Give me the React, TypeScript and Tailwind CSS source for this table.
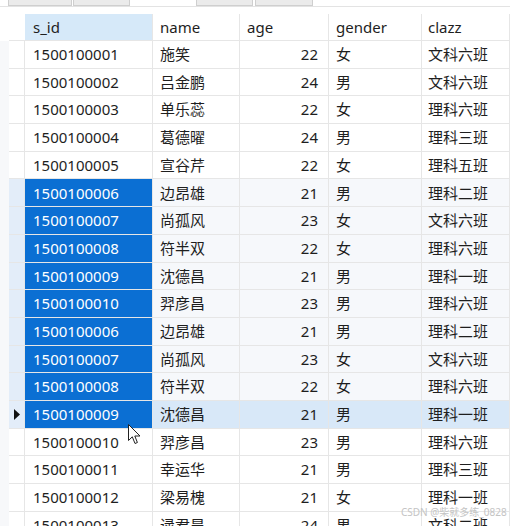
import React from "react";

type Row = [string, string, number, string, string];

const rows: Row[] = [
  ["1500100001", "施笑", 22, "女", "文科六班"],
  ["1500100002", "吕金鹏", 24, "男", "文科六班"],
  ["1500100003", "单乐蕊", 22, "女", "理科六班"],
  ["1500100004", "葛德曜", 24, "男", "理科三班"],
  ["1500100005", "宣谷芹", 22, "女", "理科五班"],
  ["1500100006", "边昂雄", 21, "男", "理科二班"],
  ["1500100007", "尚孤风", 23, "女", "文科六班"],
  ["1500100008", "符半双", 22, "女", "理科六班"],
  ["1500100009", "沈德昌", 21, "男", "理科一班"],
  ["1500100010", "羿彦昌", 23, "男", "理科六班"],
  ["1500100006", "边昂雄", 21, "男", "理科二班"],
  ["1500100007", "尚孤风", 23, "女", "文科六班"],
  ["1500100008", "符半双", 22, "女", "理科六班"],
  ["1500100009", "沈德昌", 21, "男", "理科一班"],
  ["1500100010", "羿彦昌", 23, "男", "理科六班"],
  ["1500100011", "幸运华", 21, "男", "理科三班"],
  ["1500100012", "梁易槐", 21, "女", "理科一班"],
  ["1500100013", "逯君昊", 24, "男", "文科二班"],
];

const cols = "grid grid-cols-[9px_16px_128px_87px_89px_93px_88px]";
const cell = "border-b border-r border-[#e6e6e6] flex items-center";

export default function App() {
  return (
    <div
      className="relative w-[510px] h-[526px] overflow-hidden bg-white text-[15px] text-[#1e1e1e]"
      style={{ fontFamily: '"Noto Sans", "Noto Sans CJK SC", sans-serif' }}
    >
      {/* tab strip */}
      <div className="relative h-[7px] border-b border-[#e3e3e3]">
        <div className="absolute left-[8px] top-0 w-[64px] h-[6px] bg-[#ebebeb] border border-t-0 border-[#cfcfcf]" />
        <div className="absolute left-[73px] top-0 w-[57px] h-[6px] bg-[#ebebeb] border border-t-0 border-[#cfcfcf]" />
        <div className="absolute left-[196px] top-0 w-[57px] h-[6px] bg-[#ebebeb] border border-t-0 border-[#cfcfcf]" />
        <div className="absolute left-[255px] top-0 w-[58px] h-[6px] bg-[#ebebeb] border border-t-0 border-[#cfcfcf]" />
      </div>
      <div className="h-[7px]" />

      {/* header */}
      <div className={`${cols} h-[27px]`}>
        <div className="bg-white" />
        <div className="bg-white border-b border-[#e6e6e6]" />
        <div className={`${cell} bg-[#d6e9f9] px-[8px]`}>s_id</div>
        <div className={`${cell} px-[7px]`}>name</div>
        <div className={`${cell} px-[7px]`}>age</div>
        <div className={`${cell} px-[7px]`}>gender</div>
        <div className={`${cell} px-[6px]`}>clazz</div>
      </div>

      {rows.map((r, i) => {
        const inSel = i >= 5 && i <= 13;
        const current = i === 13;
        const rest = current ? "bg-[#d8e8f8]" : inSel ? "bg-[#f6f8fb]" : "bg-white";
        return (
          <div key={i} className={`${cols} h-[27.7px]`}>
            <div className="bg-[#f7f8fa]" />
            <div
              className={`${cell} justify-center ${inSel ? "bg-[#e3edf9]" : "bg-white"}`}
            >
              {current && (
                <svg width="6" height="11" viewBox="0 0 6 11">
                  <path d="M0 0 L6 5.5 L0 11 Z" fill="#111" />
                </svg>
              )}
            </div>
            <div className={`${cell} px-[8px] ${inSel ? "bg-[#0b6fd3] text-white" : "bg-white"}`}>
              {r[0]}
            </div>
            <div className={`${cell} px-[7px] ${rest}`}>{r[1]}</div>
            <div className={`${cell} justify-end px-[10px] ${rest}`}>{r[2]}</div>
            <div className={`${cell} px-[7px] ${rest}`}>{r[3]}</div>
            <div className={`${cell} px-[6px] ${rest}`}>{r[4]}</div>
          </div>
        );
      })}

      {/* mouse cursor */}
      <svg className="absolute left-[128px] top-[424px]" width="14" height="22" viewBox="0 0 14 22">
        <path
          d="M0.5 0.5 L0.5 16.5 L4.3 12.8 L7 19.5 L9.4 18.5 L6.8 12 L12 12 Z"
          fill="#fff"
          stroke="#222"
          strokeWidth="1"
          strokeLinejoin="round"
        />
      </svg>

      {/* watermark */}
      <div className="absolute left-[401px] top-[507px] text-[10px] leading-none text-[#c4c4c4] whitespace-nowrap">
        CSDN @柴就多练_0828
      </div>
    </div>
  );
}
